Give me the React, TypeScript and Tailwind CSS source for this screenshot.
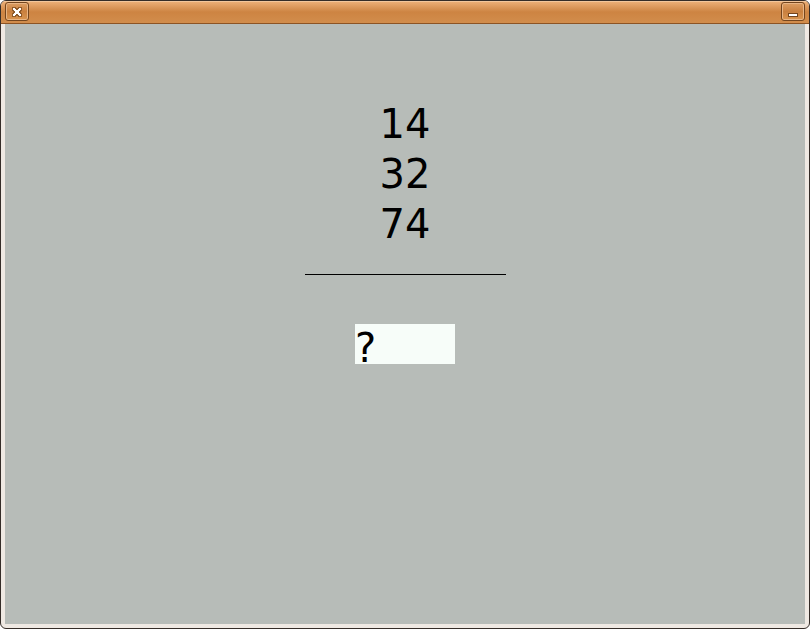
import React, { useState } from 'react';

interface TitleButtonProps {
  label: string;
  children: React.ReactNode;
}

const TitleButton: React.FC<TitleButtonProps> = ({ label, children }) => {
  return (
    <button
      type="button"
      aria-label={label}
      className="flex h-[19px] w-6 items-center justify-center rounded-[3px] border border-[#74451d] bg-gradient-to-b from-[#dc9e63] via-[#c9803f] to-[#d99550] shadow-[inset_0_0_0_1px_#e8b585]"
    >
      {children}
    </button>
  );
};

const TitleBar: React.FC = () => {
  return (
    <header className="flex h-[23px] items-start justify-between border-b border-[#8c5424] bg-gradient-to-b from-[#eeb27a] via-[#cd8442] to-[#d28d4c] px-1 pt-px shadow-[inset_0_1px_0_#f3c79c]">
      <TitleButton label="Close">
        <svg width="12" height="11" viewBox="0 0 12 11" shapeRendering="crispEdges">
          <path
            d="M1 1h4v1h2V1h4v4h-1v2h1v4H7v-1H5v1H1V7h1V5H1z"
            fill="#8f5a2a"
          />
          <path
            d="M2 2h2v1h1v1h2V3h1V2h2v2H9v1H8v2h1v1h1v2H8V9H7V8H5v1H4v1H2V8h1V7h1V5H3V4H2z"
            fill="#fff"
          />
        </svg>
      </TitleButton>
      <TitleButton label="Minimize">
        <svg width="10" height="11" viewBox="0 0 10 11" shapeRendering="crispEdges">
          <path d="M0 7h10v4H0z" fill="#74451d" />
          <path d="M1 8h8v2H1z" fill="#fff" />
        </svg>
      </TitleButton>
    </header>
  );
};

const numbers = [14, 32, 74];

export default function App() {
  const [answer, setAnswer] = useState('?');

  return (
    <div className="flex min-h-screen bg-white">
      <div className="flex flex-1 flex-col overflow-hidden rounded-[6px] border border-[#352d28] bg-[#efe9e3]">
        <TitleBar />
        <main className="mx-1 mb-1 flex flex-1 flex-col items-center bg-[#b7bcb8] pt-[75px] font-['DejaVu_Sans',sans-serif] text-[40px] text-black">
          <div className="text-center leading-[50px]">
            {numbers.map((n) => (
              <p key={n}>{n}</p>
            ))}
          </div>
          <hr className="my-[25px] w-[201px] border-black" />
          <input
            type="text"
            aria-label="Answer"
            value={answer}
            onChange={(e) => setAnswer(e.target.value)}
            className="mt-6 h-10 w-[100px] bg-[#f7fdf9] pt-2 outline-none"
          />
        </main>
      </div>
    </div>
  );
}
